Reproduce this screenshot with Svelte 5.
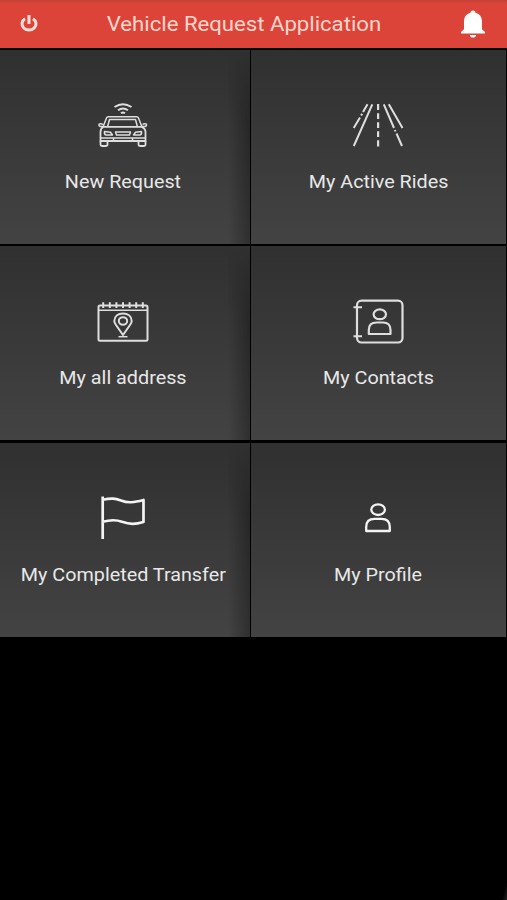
<script lang="ts">
  const tiles = [
    { label: 'New Request', icon: 'car' },
    { label: 'My Active Rides', icon: 'road' },
    { label: 'My all address', icon: 'address' },
    { label: 'My Contacts', icon: 'contacts' },
    { label: 'My Completed Transfer', icon: 'flag' },
    { label: 'My Profile', icon: 'profile' },
  ];
</script>

<div class="screen">
  <header>
    <button class="power" aria-label="Log out">
      <svg viewBox="0 0 20 20" fill="none" stroke="currentColor" stroke-width="3">
        <path d="M6 4.800A7 6.200 0 1 0 14 4.800M10 1V10" />
      </svg>
    </button>
    <h1><span>Vehicle Request Application</span></h1>
    <button class="bell" aria-label="Notifications">
      <svg viewBox="0 0 26 30" fill="currentColor">
        <path d="M13 1.500c1.500 0 2.400.9 2.400 2.300 4.300 1 6.600 4.400 6.600 8.700v7.700l3 2.700v1.500H1v-1.500l3-2.700v-7.700c0-4.300 2.300-7.700 6.600-8.700 0-1.400.9-2.300 2.400-2.300zM9.800 25.900h6.400c-.3 1.700-1.500 2.700-3.200 2.700s-2.900-1-3.200-2.700z" />
      </svg>
    </button>
  </header>

  <main>
    {#each tiles as tile}
      <button class="tile">
        {#if tile.icon === 'car'}
          <svg class="icon" viewBox="8 4 60 60">
            <path d="M29.5 17Q38 11.500 46.5 17M33 20.300Q38 16.800 43 20.300M36 23.300Q38 21.800 40 23.300" />
            <path d="M18 37L21.500 28Q22 26.800 23.500 26.800H51.500Q53 26.800 53.500 28L57 37M22.500 37L24.500 29.500H50.500L52.500 37" stroke-width="1.5" />
            <path d="M18.500 36.800H56.500Q60.500 38.500 60.500 42V51H15.500V42Q15.500 38.500 18.500 36.800Z" stroke-width="1.800" />
            <path d="M18 36.500H15.200Q13.500 35.800 14 34.200Q16 33 18 34.500M57 36.500H60.300Q62 35.800 61.500 34.200Q59.500 33 57.500 34.500" stroke-width="1.500" />
            <path d="M19.500 41.500L25.500 42.200L27.500 45H21Q19 44.500 19.500 41.500ZM56.500 41.500L50.500 42.200L48.500 45H55Q57 44.500 56.500 41.500ZM30.500 42H45.500L44.500 45H31.500ZM28.500 51V48H47.500V51M16 48H28.500M47.500 48H60" stroke-width="1.500" />
            <path d="M15.500 51V54.500Q15.500 56 17 56H20.500Q22.500 56 22.500 54.500V51M53.500 51V54.500Q53.500 56 55 56H58.500Q60.500 56 60.500 54.500V51" stroke-width="1.800" />
          </svg>
        {:else if tile.icon === 'road'}
          <svg class="icon" viewBox="8.5 4 60 60">
            <path d="M28 14.300L23.500 22M22.700 23.800L21.600 25.600M20.500 27.500L14.200 38M32.800 14.300L14.300 56" />
            <path d="M44.300 14.300L54.500 38M55.400 40L56 41.500M57 43.500L62.500 56M49.300 14.300L63 38" />
            <path d="M38.600 14V20M38.600 23.300V29M38.600 32.300V38M38.600 41.300V47M38.600 50.300V56.500" stroke-width="2.200" />
          </svg>
        {:else if tile.icon === 'address'}
          <svg class="icon" viewBox="8 0 60 60">
            <rect x="13.500" y="15.500" width="49" height="35.300" rx="1.500" />
            <path d="M14 20.200H62" stroke-width="1.600" />
            <path d="M18.200 12.300V18M24.800 12.300V18M31.400 12.300V18M38 12.300V18M44.600 12.300V18M51.200 12.300V18M57.800 12.300V18" />
            <path d="M38 45L31 35Q29.300 32.500 29.300 31C29.300 26.300 33 23.500 38 23.500S46.700 26.300 46.700 31Q46.700 32.500 45 35Z" />
            <ellipse cx="38" cy="31" rx="4.200" ry="3.800" />
            <path d="M33.500 46.700H42.500" stroke-width="1.500" />
          </svg>
        {:else if tile.icon === 'contacts'}
          <svg class="icon" viewBox="8.5 0 60 60">
            <rect x="17.500" y="10.700" width="45.500" height="41.800" rx="4.500" stroke-width="2.200" />
            <path d="M14 17.300H22.500M14 46.300H22.500" />
            <ellipse cx="40.300" cy="24.300" rx="6.200" ry="4.900" stroke-width="2.200" />
            <path d="M29.300 44V40Q29.300 32.500 37 32.500H43.500Q51 32.500 51 40V44Z" stroke-width="2.200" />
          </svg>
        {:else if tile.icon === 'flag'}
          <svg class="icon bright" viewBox="8 2 60 60">
            <path d="M17.700 11.500V54M17.700 14.800C27 12.800 30 13.500 36 15.500C43 18.300 49 17.500 58.500 15V37C50 39.500 45 39.500 37 36.800C31 34.500 26 34.500 17.700 36.800" />
          </svg>
        {:else}
          <svg class="icon bright profile" viewBox="8.5 1.5 60 60">
            <ellipse cx="38.600" cy="24.200" rx="6.800" ry="5.300" />
            <path d="M26.700 45.500V41.500Q26.700 33.300 35 33.300H42Q50.300 33.300 50.300 41.500V45.500Z" />
          </svg>
        {/if}
        <span class="label">{tile.label}</span>
      </button>
    {/each}
  </main>
</div>

<style>
  :global(body) {
    margin: 0;
    background: #000;
  }

  .screen {
    height: 900px;
    overflow: hidden;
    background: linear-gradient(105deg, #000 calc(100% - 5px), #222) right bottom / 8px 20px no-repeat #000;
    font-family: Roboto, sans-serif;
  }

  button {
    margin: 0;
    padding: 0;
    border: 0;
    background: none;
    color: inherit;
    font: inherit;
  }

  header {
    display: flex;
    align-items: center;
    box-sizing: border-box;
    height: 48px;
    padding: 0 21px 0 19px;
    background: linear-gradient(#bd4238, #dc4439 3px, #dc4439);
    color: #ffe0d8;
  }

  header svg {
    display: block;
  }

  .power svg {
    width: 20px;
    height: 20px;
  }

  .bell {
    color: #fff;
  }

  .bell svg {
    width: 26px;
    height: 30px;
  }

  h1 {
    flex: 1;
    margin: 0;
    padding-right: 11px;
    color: #ffd6cc;
    font-size: 20px;
    font-weight: 400;
    line-height: 24px;
    text-align: center;
    white-space: nowrap;
  }

  h1 span {
    display: inline-block;
    transform: scaleX(1.107);
  }

  main {
    display: grid;
    grid-template-columns: 250px 254.5px;
    grid-auto-rows: 194px;
    gap: 2.3px 1px;
    padding-top: 2px;
  }

  .tile {
    display: flex;
    flex-direction: column;
    align-items: center;
    box-sizing: border-box;
    padding-top: 44px;
    background: linear-gradient(#303030, #434343);
    color: #e8e8e8;
  }

  .tile:nth-child(odd) {
    padding-right: 4px;
    background:
      linear-gradient(to bottom, #303030, transparent 35%) right / 22px 100% no-repeat,
      linear-gradient(to right, transparent, rgba(0, 0, 0, 0.3)) right / 22px 100% no-repeat,
      linear-gradient(#303030, #434343);
  }

  .icon {
    width: 60px;
    height: 60px;
    fill: none;
    stroke: #dedede;
    stroke-width: 2;
    stroke-linejoin: round;
  }

  .icon.bright {
    stroke: #f4f4f4;
    stroke-width: 2.7;
  }

  .icon.profile {
    stroke-width: 2.3;
  }

  .label {
    margin-top: 17px;
    font-size: 18px;
    line-height: 22px;
    white-space: nowrap;
    transform: scaleX(1.098);
  }
</style>
